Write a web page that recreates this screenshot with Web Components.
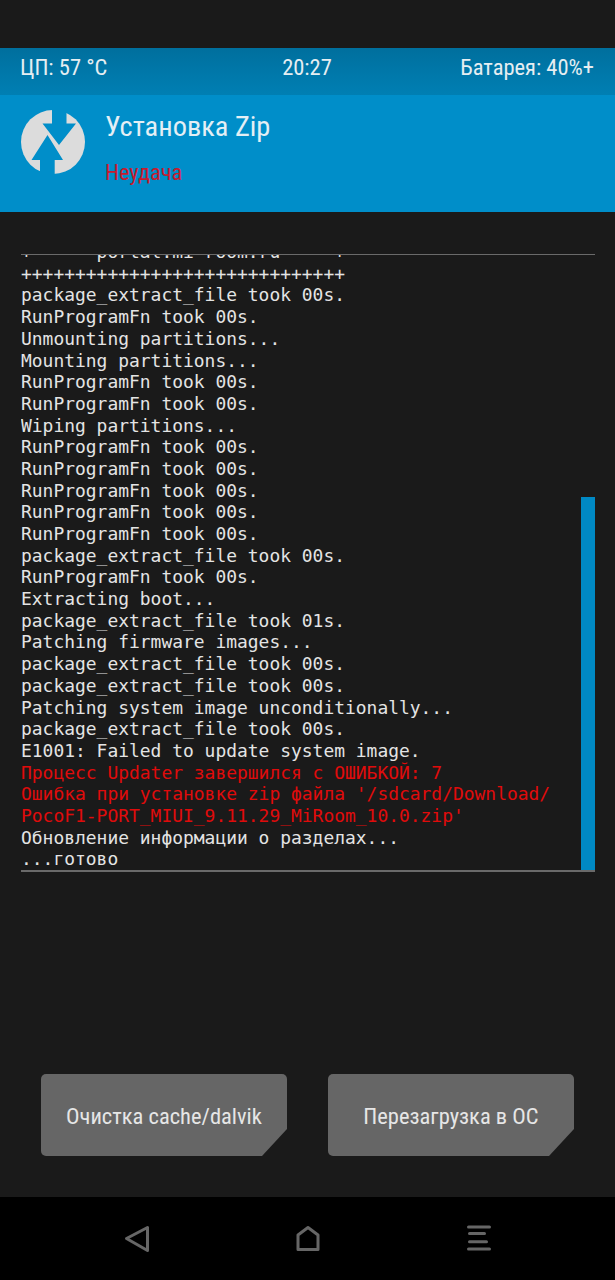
<!DOCTYPE html>
<html lang="ru">
<head>
<meta charset="utf-8">
<title>TWRP</title>
<style>
  html, body { margin: 0; padding: 0; background: #1a1a1a; }
  body { width: 615px; height: 1280px; overflow: hidden; font-family: Roboto, "Liberation Sans", sans-serif; }
</style>
</head>
<body>
<twrp-screen>
  <twrp-status slot="status" cpu="ЦП: 57 °C" time="20:27" battery="Батарея: 40%+"></twrp-status>
  <twrp-header slot="header" heading="Установка Zip" result="Неудача"></twrp-header>
  <twrp-log slot="log" thumb="373">
    <log-line>+      portal.mi-room.ru     +</log-line>
    <log-line>++++++++++++++++++++++++++++++</log-line>
    <log-line>package_extract_file took 00s.</log-line>
    <log-line>RunProgramFn took 00s.</log-line>
    <log-line>Unmounting partitions...</log-line>
    <log-line>Mounting partitions...</log-line>
    <log-line>RunProgramFn took 00s.</log-line>
    <log-line>RunProgramFn took 00s.</log-line>
    <log-line>Wiping partitions...</log-line>
    <log-line>RunProgramFn took 00s.</log-line>
    <log-line>RunProgramFn took 00s.</log-line>
    <log-line>RunProgramFn took 00s.</log-line>
    <log-line>RunProgramFn took 00s.</log-line>
    <log-line>RunProgramFn took 00s.</log-line>
    <log-line>package_extract_file took 00s.</log-line>
    <log-line>RunProgramFn took 00s.</log-line>
    <log-line>Extracting boot...</log-line>
    <log-line>package_extract_file took 01s.</log-line>
    <log-line>Patching firmware images...</log-line>
    <log-line>package_extract_file took 00s.</log-line>
    <log-line>package_extract_file took 00s.</log-line>
    <log-line>Patching system image unconditionally...</log-line>
    <log-line>package_extract_file took 00s.</log-line>
    <log-line>E1001: Failed to update system image.</log-line>
    <log-line error>Процесс Updater завершился с ОШИБКОЙ: 7</log-line>
    <log-line error>Ошибка при установке zip файла '/sdcard/Download/</log-line>
    <log-line error>PocoF1-PORT_MIUI_9.11.29_MiRoom_10.0.zip'</log-line>
    <log-line>Обновление информации о разделах...</log-line>
    <log-line>...готово</log-line>
  </twrp-log>
  <twrp-button slot="actions">Очистка cache/dalvik</twrp-button>
  <twrp-button slot="actions">Перезагрузка в ОС</twrp-button>
  <twrp-nav slot="nav"></twrp-nav>
</twrp-screen>

<script>
class TwrpScreen extends HTMLElement {
  constructor() {
    super();
    this.attachShadow({ mode: 'open' });
    this.shadowRoot.innerHTML = `
      <style>
        :host { display: flex; flex-direction: column; width: 615px; height: 1280px; padding-top: 48px; box-sizing: border-box; background: #1a1a1a; }
        .log { display: block; margin-top: 42px; }
        .actions { display: flex; justify-content: space-between; padding: 0 41px; margin-top: auto; margin-bottom: 41px; }
      </style>
      <slot name="status"></slot>
      <slot name="header"></slot>
      <div class="log"><slot name="log"></slot></div>
      <div class="actions"><slot name="actions"></slot></div>
      <slot name="nav"></slot>
    `;
  }
}
customElements.define('twrp-screen', TwrpScreen);

class TwrpStatus extends HTMLElement {
  constructor() {
    super();
    this.attachShadow({ mode: 'open' });
    this.shadowRoot.innerHTML = `
      <style>
        :host { display: grid; grid-template-columns: 1fr auto 1fr; align-items: center; height: 47px; padding: 0 21px 9px 20px; box-sizing: border-box;
          background: linear-gradient(#006f9d, #0079ab 60%, #007fb3); color: #e6eef2;
          font-family: Roboto, sans-serif; font-size: 22.5px; font-stretch: 75%; }
        span { white-space: nowrap; }
        .r { justify-self: end; }
      </style>
      <span>${this.getAttribute('cpu')}</span>
      <span>${this.getAttribute('time')}</span>
      <span class="r">${this.getAttribute('battery')}</span>
    `;
  }
}
customElements.define('twrp-status', TwrpStatus);

class TwrpHeader extends HTMLElement {
  constructor() {
    super();
    this.attachShadow({ mode: 'open' });
    this.shadowRoot.innerHTML = `
      <style>
        :host { display: flex; height: 117px; padding: 15px 0 0 21px; box-sizing: border-box; background: #008ec9; font-family: Roboto, sans-serif; font-stretch: 75%; }
        svg { display: block; width: 64px; height: 64px; flex: none; }
        .text { display: flex; flex-direction: column; margin-left: 20px; }
        .title, .result { white-space: nowrap; }
        .title { color: #e4eff5; font-size: 28.4px; line-height: 34px; }
        .result { color: #c71a2e; font-size: 22.4px; line-height: 28px; margin-top: 14px; }
      </style>
      <svg viewBox="0 0 64 64">
        <circle cx="32" cy="32" r="32" fill="#dcdcdc"/>
        <path fill="#008ec9" d="M31 -2H45.5V13.5H55L38 35 21.5 13.5H31Z"/>
        <path fill="#008ec9" d="M26.5 25 42 50H33.7V66H19V50H10.5Z"/>
      </svg>
      <div class="text">
        <span class="title">${this.getAttribute('heading')}</span>
        <span class="result">${this.getAttribute('result')}</span>
      </div>
    `;
  }
}
customElements.define('twrp-header', TwrpHeader);

class TwrpLog extends HTMLElement {
  constructor() {
    super();
    this.attachShadow({ mode: 'open' });
    this.shadowRoot.innerHTML = `
      <style>
        :host { display: block; position: relative; width: 574px; height: 618px; margin-left: 21px; box-sizing: border-box; border-top: 1px solid #6a6a6a; border-bottom: 2px solid #6a6a6a; }
        .lines { display: flex; flex-direction: column; justify-content: flex-end; height: 100%; overflow: hidden; }
        .inner { flex: none; }
        .thumb { position: absolute; right: 0; bottom: 0; width: 14px; height: ${this.getAttribute('thumb')}px; background: #0089c4; }
      </style>
      <div class="lines"><div class="inner"><slot></slot></div></div>
      <div class="thumb"></div>
    `;
  }
}
customElements.define('twrp-log', TwrpLog);

class LogLine extends HTMLElement {
  constructor() {
    super();
    this.attachShadow({ mode: 'open' });
    // white-space: pre goes on the slot, the template's own indentation must not render
    this.shadowRoot.innerHTML = `
      <style>
        :host { display: block; height: 21.69px; line-height: 21.69px; color: #e4e4e4;
          font-family: "DejaVu Sans Mono", monospace; font-size: 17.95px; }
        :host([error]) { color: #e00b0b; }
        slot { white-space: pre; }
      </style>
      <slot></slot>
    `;
  }
}
customElements.define('log-line', LogLine);

class TwrpButton extends HTMLElement {
  constructor() {
    super();
    this.attachShadow({ mode: 'open' });
    this.shadowRoot.innerHTML = `
      <style>
        :host { display: flex; align-items: center; justify-content: center; width: 246px; height: 82px; padding-top: 2px; box-sizing: border-box; border-radius: 5px; background: #666;
          clip-path: polygon(0 0, 100% 0, 100% calc(100% - 27px), calc(100% - 25px) 100%, 0 100%);
          color: #e6e6e6; font-family: Roboto, sans-serif; font-size: 22.5px; font-stretch: 75%; white-space: nowrap; }
      </style>
      <slot></slot>
    `;
  }
}
customElements.define('twrp-button', TwrpButton);

class TwrpNav extends HTMLElement {
  constructor() {
    super();
    this.attachShadow({ mode: 'open' });
    this.shadowRoot.innerHTML = `
      <style>
        :host { display: flex; justify-content: space-between; height: 83px; padding: 27px 123px 0 123px; box-sizing: border-box; background: #000; }
        svg { display: block; width: 28px; height: 30px; fill: none; stroke: #666; stroke-width: 3; stroke-linejoin: round; stroke-linecap: round; }
      </style>
      <svg viewBox="0 0 28 30"><path d="M3.5 14.5 24.5 3.5V26.5Z"/></svg>
      <svg viewBox="0 0 28 30"><path d="M14 3.5 24 11V25.5H4V11Z"/></svg>
      <svg viewBox="0 0 28 30"><path d="M4.5 3H25.5M5.5 9.5H20.5M5.5 17.7H22.5M4.5 25H25.5"/></svg>
    `;
  }
}
customElements.define('twrp-nav', TwrpNav);
</script>
</body>
</html>
